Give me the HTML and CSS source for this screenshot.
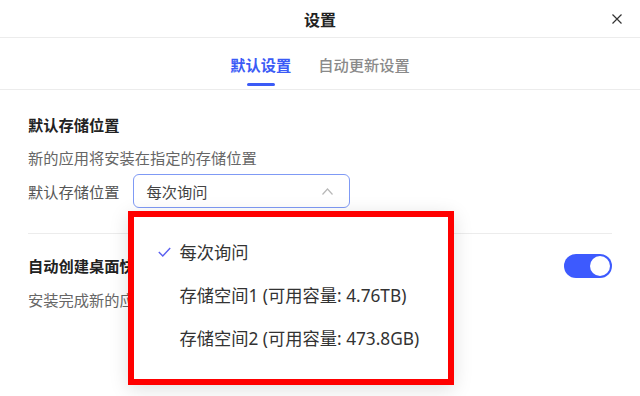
FILE: index.html
```html
<!DOCTYPE html>
<html lang="zh-CN">
<head>
  <meta charset="UTF-8" />
  <meta name="viewport" content="width=device-width, initial-scale=1" />
  <title>设置</title>
  <link rel="stylesheet" href="styles.css">
</head>
<body>
  <div class="dialog">
    <header class="header">
      <span></span>
      <h1 class="title">设置</h1>
      <button class="close" aria-label="关闭">
        <svg width="10" height="10" viewBox="0 0 10 10"><path d="M0.5 0.5L9.5 9.5M9.5 0.5L0.5 9.5" stroke="#333" stroke-width="1.2" fill="none"/></svg>
      </button>
    </header>
    <nav class="tabs">
      <a href="#" class="tab active"><span>默认设置</span><i class="bar"></i></a>
      <a href="#" class="tab"><span>自动更新设置</span><i class="bar"></i></a>
    </nav>
    <section class="section first">
      <div class="sec-title">默认存储位置</div>
      <div class="sec-desc">新的应用将安装在指定的存储位置</div>
      <div class="row">
        <span class="label">默认存储位置</span>
        <div class="select-wrap">
          <div class="select">
            <span>每次询问</span>
            <svg width="11" height="7" viewBox="0 0 11 7"><polyline points="0.5,6.5 5.5,1 10.5,6.5" stroke="#b8b8b8" stroke-width="1.2" fill="none"/></svg>
          </div>
          <ul class="dropdown">
            <li class="option selected">
              <svg class="check" width="13" height="10" viewBox="0 0 13 10"><polyline points="0.8,5 4.8,9 12.2,1" stroke="#5a5ff0" stroke-width="1.4" fill="none"/></svg>
              <span>每次询问</span>
            </li>
            <li class="option"><i class="check"></i><span>存储空间1 (可用容量: 4.76TB)</span></li>
            <li class="option"><i class="check"></i><span>存储空间2 (可用容量: 473.8GB)</span></li>
          </ul>
        </div>
      </div>
    </section>
    <section class="section second">
      <div class="text">
        <div class="sec-title">自动创建桌面快捷方式</div>
        <div class="sec-desc">安装完成新的应用后自动创建</div>
      </div>
      <div class="toggle on"><span class="knob"></span></div>
    </section>
  </div>
</body>
</html>
```

FILE: styles.css
```css
body { margin: 0; background: #fff; font-family: "Noto Sans CJK SC", "Noto Sans", sans-serif; color: #222; }
.dialog { width: 640px; height: 396px; overflow: hidden; }

.header { display: grid; grid-template-columns: 1fr auto 1fr; align-items: center; height: 38px; border-bottom: 1px solid #ececec; box-sizing: border-box; }
.title { margin: 0; font-size: 16px; font-weight: 700; line-height: 22px; color: #222; }
.close { justify-self: end; margin-right: 18px; padding: 0; border: 0; background: none; width: 10px; height: 10px; display: flex; }

.tabs { display: flex; justify-content: center; gap: 27px; height: 52px; border-bottom: 1px solid #ececec; box-sizing: border-box; }
.tab { display: flex; flex-direction: column; align-items: center; text-decoration: none; color: #8a8a8a; font-size: 15.25px; font-weight: 500; line-height: 22px; padding-top: 15px; }
.tab .bar { display: block; width: 28px; height: 3px; margin-top: 8px; border-radius: 2px; }
.tab.active { color: #3b5bf6; font-weight: 700; }
.tab.active .bar { background: #3b5bf6; }

.section { margin: 0 28px; }
.sec-title { font-size: 15.25px; font-weight: 700; line-height: 22px; color: #222; }
.sec-desc { font-size: 15.25px; line-height: 22px; color: #666; margin-top: 11px; }
.section.first { padding: 23px 0 25px; border-bottom: 1px solid #ececec; }
.row { display: flex; align-items: center; gap: 13px; margin-top: 6px; }
.label { font-size: 15.25px; color: #555; line-height: 22px; }
.select-wrap { position: relative; }
.select { width: 217px; height: 34px; box-sizing: border-box; border: 1px solid #7f9af5; border-radius: 6px; display: flex; align-items: center; justify-content: space-between; padding: 0 16px 0 13px; font-size: 15.25px; color: #444; }

.dropdown { position: absolute; left: -5px; top: 37px; z-index: 2; width: 326px; height: 174px; box-sizing: border-box; margin: 0; padding: 13px 0 0 24px; list-style: none; background: #fff; border: 6px solid #ff0000; box-shadow: 0 4px 18px rgba(0,0,0,0.13); }
.option { display: flex; align-items: center; gap: 9px; height: 43px; font-family: "Noto Sans", "Noto Sans CJK SC", sans-serif; font-size: 17.25px; color: #333; }
.option .check { width: 13px; flex: none; }

.section.second { display: flex; justify-content: space-between; align-items: flex-start; padding-top: 20px; }
.second .sec-desc { margin-top: 12px; }
.toggle { width: 48px; height: 24px; box-sizing: border-box; border-radius: 12px; background: #3d5afe; display: flex; justify-content: flex-end; align-items: center; padding: 2px; }
.knob { width: 20px; height: 20px; border-radius: 50%; background: #fff; }
```
